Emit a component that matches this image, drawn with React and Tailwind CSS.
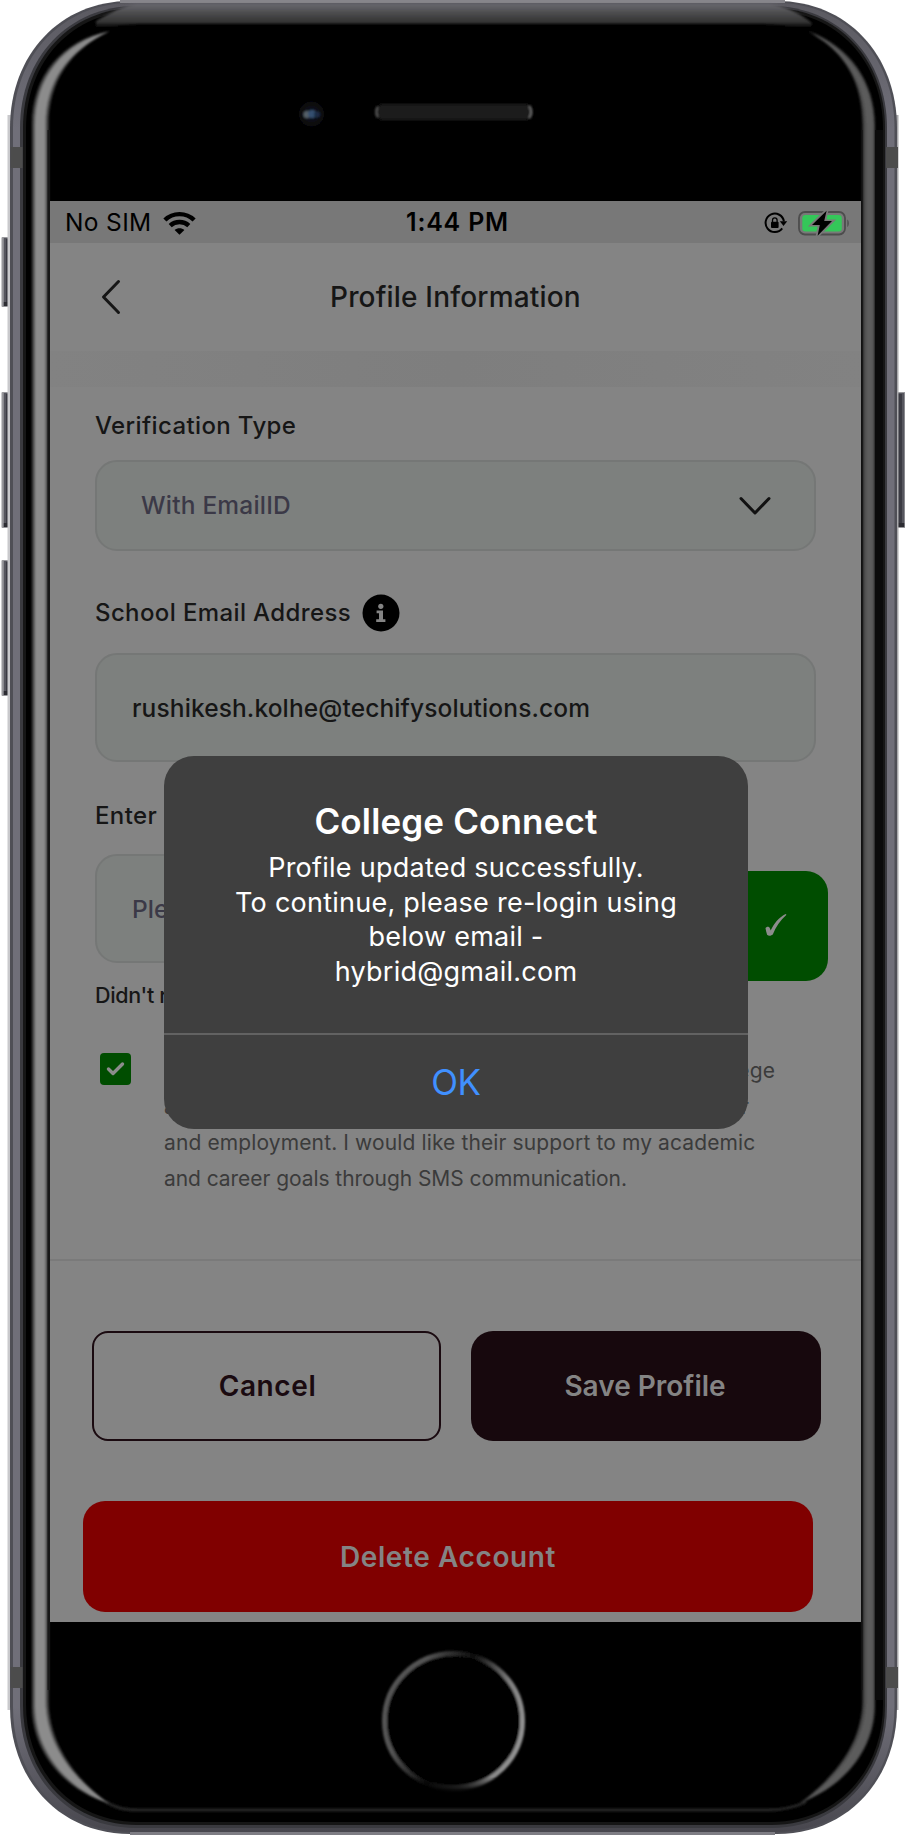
const SANS = "font-['Inter','Liberation_Sans',sans-serif]";

/* Rounded-rectangle outline of the handset between two corners. */
function shell(x1, y1, x2, y2, rx, ry) {
  return `M${x1 + rx} ${y1}H${x2 - rx}C${x2 - rx * 0.42} ${y1} ${x2} ${y1 + ry * 0.42} ${x2} ${y1 + ry}V${y2 - ry}C${x2} ${y2 - ry * 0.42} ${x2 - rx * 0.42} ${y2} ${x2 - rx} ${y2}H${x1 + rx}C${x1 + rx * 0.42} ${y2} ${x1} ${y2 - ry * 0.42} ${x1} ${y2 - ry}V${y1 + ry}C${x1} ${y1 + ry * 0.42} ${x1 + rx * 0.42} ${y1} ${x1 + rx} ${y1}Z`;
}

function SideKey({ x, y, h }) {
  return (
    <g>
      <rect x={x - 0.5} y={y} width="9" height={h} rx="1" fill="#98989c" />
      <rect x={x + 1.8} y={y + 1} width="7" height={h - 2} fill="#56565e" />
      <rect x={x + 4} y={y + 2} width="5" height={h - 4} fill="#3b3b43" />
      <rect x={x + 1.8} y={y + h - 5} width="7" height="4" fill="#2c2c32" />
    </g>
  );
}

function Handset() {
  return (
    <svg className="absolute inset-0" width="905" height="1835" viewBox="0 0 905 1835" aria-hidden="true">
      <defs>
        <linearGradient id="topBar" x1="0" x2="0" y1="0" y2="1">
          <stop offset="0" stopColor="#69686f" />
          <stop offset="0.3" stopColor="#4e4e50" />
          <stop offset="0.65" stopColor="#333333" />
          <stop offset="0.85" stopColor="#000000" />
        </linearGradient>
        <linearGradient id="edge" gradientUnits="userSpaceOnUse" x1="0" x2="0" y1="0" y2="1835">
          <stop offset="0" stopColor="#5a5960" />
          <stop offset="0.07" stopColor="#706f79" />
          <stop offset="0.93" stopColor="#706f79" />
          <stop offset="1" stopColor="#47464d" />
        </linearGradient>
        <linearGradient id="ring" x1="0" x2="1" y1="0.25" y2="0.6">
          <stop offset="0" stopColor="#555555" />
          <stop offset="0.2" stopColor="#555555" />
          <stop offset="0.5" stopColor="#0c0c0c" />
          <stop offset="0.8" stopColor="#808080" />
          <stop offset="1" stopColor="#929292" />
        </linearGradient>
        <linearGradient id="ringShade" x1="0" x2="0" y1="0" y2="1">
          <stop offset="0" stopColor="#000000" stopOpacity="0" />
          <stop offset="0.88" stopColor="#000000" stopOpacity="0" />
          <stop offset="0.97" stopColor="#000000" stopOpacity="0.85" />
        </linearGradient>
        <filter id="soft" x="-5%" y="-5%" width="110%" height="110%">
          <feGaussianBlur stdDeviation="0.9" />
        </filter>
      </defs>
      <SideKey x={2} y={237} h={70} />
      <SideKey x={2} y={392} h={136} />
      <SideKey x={2} y={560} h={136} />
      <g transform="translate(907 0) scale(-1 1)">
        <SideKey x={1} y={392} h={136} />
      </g>
      <rect x="7.500" y="115" width="4" height="1595" fill="#c9c9cc" />
      <rect x="895.500" y="115" width="3" height="1595" fill="#a9a9ac" />
      <path d={shell(10, 1, 897, 1834, 120, 127)} fill="#4f4f56" />
      <path d={shell(13, 3, 894.5, 1832, 118, 125)} fill="url(#edge)" />
      <path d="M120 0H785" stroke="#86858b" strokeWidth="6" />
      <path d="M130 1835H775" stroke="#7e7d84" strokeWidth="6" />
      <path d={shell(20, 6, 887, 1828, 116, 122)} fill="#3a3a3f" />
      <path d={shell(23, 8, 885, 1825, 114, 120)} fill="#161616" />
      <path d={shell(26, 11, 883, 1822, 112, 118)} fill="#000000" />
      {/* antenna bands */}
      <rect x="10.500" y="147" width="12" height="21" fill="#4c4c4c" />
      <rect x="886" y="147" width="12" height="21" fill="#4c4c4c" />
      <rect x="10.500" y="1667" width="12" height="21" fill="#4c4c4c" />
      <rect x="886" y="1667" width="12" height="21" fill="#4c4c4c" />
      <g filter="url(#soft)">
        {/* polished top and bottom edges */}
        <path d="M96 21C110 13 122 6 136 4H770C784 6 800 13 812 23L810 32C796 27 780 24 762 24H140C122 24 110 27 96 30Z" fill="url(#topBar)" />
        <path d="M106 1802C116 1808 124 1810 138 1810H768C783 1810 795 1807 806 1802" stroke="#262626" strokeWidth="3" fill="none" />
        {/* side reflections */}
        <path d="M110 31C62 40 32 76 32 125V1706C32 1752 64 1790 110 1804C78 1782 48.500 1745 48.500 1700V125C48.500 82 70 50 110 31Z" fill="#4c4c4c" />
        <path d="M108 32C64 42 35 78 35 125V1706C35 1750 66 1788 108 1803C74 1780 45.500 1745 45.500 1700V125C45.500 82 66 52 108 32Z" fill="#8c8c8c" />
        <path d="M808 31C850 46 875 82 875 125V1706C875 1748 846 1786 800 1803C836 1776 862.500 1742 862.500 1700V125C862.500 84 846 52 808 31Z" fill="#444444" />
        <path d="M812 34C850 50 873.500 84 873.500 125V1706C873.500 1746 848 1782 806 1800C840 1774 865.500 1742 865.500 1700V125C865.500 86 848 54 812 34Z" fill="#5b5b5b" />
      </g>
      <rect x="47.500" y="130" width="2.500" height="1560" fill="#171717" />
      <rect x="861" y="130" width="1.500" height="1560" fill="#111111" />
      <rect x="875" y="130" width="8" height="1570" fill="#0b0b0b" />
      {/* camera and speaker */}
      <g filter="url(#soft)">
        <circle cx="311.500" cy="114" r="13" fill="#070708" />
        <circle cx="311.500" cy="114" r="9" fill="#0f1114" />
        <circle cx="307" cy="114.500" r="3.500" fill="#566068" />
        <circle cx="312" cy="114" r="4" fill="#34506f" />
        <circle cx="317" cy="114.500" r="3" fill="#1c2b44" />
        <rect x="375" y="103" width="158" height="18" rx="8" fill="#0c0c0c" />
        <rect x="377" y="105" width="154" height="14" rx="6" fill="#1c1c1c" />
        <path d="M377.500 107C376 110 376 114 377.500 117" stroke="#5a5a5a" strokeWidth="2" fill="none" />
        <path d="M529 106C532 109 532 115 529 118" stroke="#6a6a6a" strokeWidth="2" fill="none" />
        {/* home key */}
        <ellipse cx="453.500" cy="1721" rx="69" ry="67.500" fill="#000000" stroke="url(#ring)" strokeWidth="5" />
      </g>
      <rect x="380" y="1650" width="148" height="144" fill="url(#ringShade)" />
    </svg>
  );
}

function WifiIcon() {
  return (
    <svg width="33" height="24" viewBox="0 0 33 24" fill="none" stroke="#000" strokeWidth="4.400">
      <path d="M1.900 9C9.800 1.100 23.200 1.100 31.100 9" />
      <path d="M7.200 14.600C12.300 9.800 20.700 9.800 25.800 14.600" />
      <path d="M16.500 23.800L11.600 19C14.300 16.500 18.700 16.500 21.400 19Z" fill="#000" stroke="none" />
    </svg>
  );
}

function RotationLockIcon() {
  return (
    <svg width="24" height="22" viewBox="0 0 24 22" fill="none">
      <path d="M18.200 16.300A9.200 9.200 0 1 1 19.900 9.400" stroke="#000" strokeWidth="2" />
      <path d="M15.800 9.300H23.200L19.500 14Z" fill="#000" />
      <rect x="7" y="9.800" width="7.600" height="6.200" rx="1" fill="#000" />
      <path d="M8.500 10V8.200A2.300 2.300 0 0 1 13.100 8.200V10" stroke="#000" strokeWidth="1.300" />
    </svg>
  );
}

function BatteryIcon() {
  return (
    <svg width="52" height="26" viewBox="0 0 52 26" fill="none">
      <rect x="1" y="2" width="46" height="22.500" rx="6" stroke="#4d4d4d" strokeWidth="1.800" />
      <rect x="4.300" y="5" width="39.500" height="16.500" rx="3.200" fill="#34c759" />
      <path d="M49.300 9.500C51.300 10.600 51.300 15.900 49.300 17Z" fill="#4d4d4d" />
      <path d="M28.500 1L14.200 14.800H21.800L19.600 25.500L33.900 11.200H26.300Z" fill="#787878" stroke="#787878" strokeWidth="3.600" />
      <path d="M28.600 0.800L14 14.900H21.800L19.600 25.700L34 11.100H26.200Z" fill="#000" />
    </svg>
  );
}

function StatusBar() {
  return (
    <div className="flex h-[42px] shrink-0 items-center justify-between bg-[#787878] pt-px pr-[11px] pl-[15px] text-black">
      <div className="flex w-[330px] items-center gap-[11px]">
        <span className="text-[24.5px] leading-none tracking-[0.35px]">No SIM</span>
        <WifiIcon />
      </div>
      <span className="text-[25px] leading-none font-semibold tracking-[0.8px]">1:44 PM</span>
      <div className="flex w-[330px] items-center justify-end gap-2.5">
        <RotationLockIcon />
        <BatteryIcon />
      </div>
    </div>
  );
}

function Header() {
  return (
    <div className="flex h-[108px] shrink-0 items-center bg-[#848484] pl-[51px]">
      <svg width="20" height="36" viewBox="0 0 20 36" fill="none" stroke="#161616" strokeWidth="3" strokeLinecap="round" strokeLinejoin="round">
        <path d="M17.500 2.500L2.500 18L17.500 33.500" />
      </svg>
      <h1 className="ml-[209px] text-[28px] leading-none font-medium tracking-[0.18px] text-[#161616]">Profile Information</h1>
    </div>
  );
}

function Label({ children }) {
  return <span className="text-[24px] leading-[36px] font-medium tracking-[0.38px] whitespace-nowrap text-[#161616]">{children}</span>;
}

const FIELD = "flex items-center rounded-[22px] border-2 border-[#757776] bg-[#7d807e]";

function Form() {
  return (
    <div className="flex h-[872px] shrink-0 flex-col pt-[21px] pl-[45px]">
      <Label>Verification Type</Label>
      <div className={`${FIELD} mt-4 h-[91px] w-[721px] justify-between pr-[42px] pl-[44px]`}>
        <span className="text-[24.5px] leading-none font-medium tracking-[0.2px] text-[#3b3947]">With EmailID</span>
        <svg width="34" height="20" viewBox="0 0 34 20" fill="none" stroke="#111" strokeWidth="3" strokeLinecap="round" strokeLinejoin="round">
          <path d="M3 2.500L17 17L31 2.500" />
        </svg>
      </div>

      <div className="mt-[43px] flex h-[37px] items-center gap-[11px]">
        <Label>School Email Address</Label>
        <svg width="38" height="38" viewBox="0 0 38 38">
          <circle cx="19" cy="19" r="18.500" fill="#000" />
          <circle cx="18.800" cy="12.300" r="2.600" fill="#848484" />
          <path d="M14.600 16.600H21V25.200H23.400V28H14.200V25.200H17V19.300H14.600Z" fill="#848484" />
        </svg>
      </div>
      <div className={`${FIELD} mt-[22px] h-[109px] w-[721px] pt-px pl-[35px]`}>
        <span className="text-[24.5px] leading-none font-medium tracking-[0.12px] text-[#161616]">rushikesh.kolhe@techifysolutions.com</span>
      </div>

      <div className="mt-9 flex h-[36px]">
        <Label>Enter</Label>
      </div>
      <div className="mt-5 flex h-[127px] w-[733px] items-start justify-between">
        <div className={`${FIELD} h-[109px] w-[560px] pt-px pl-[35px]`}>
          <span className="text-[24.5px] leading-none font-medium text-[#3b3947]">Please</span>
        </div>
        <div className="mt-[17px] flex h-[110px] w-[112px] items-center justify-center rounded-[22px] bg-[#004d00] pb-[3px] pl-[8px]">
          <svg width="24" height="24" viewBox="0 0 24 24" fill="#8c8c8c">
            <path d="M1.500 15.200C2.600 13.100 5.200 13.200 5.900 15.200L6.700 17.600C10 10.600 14.500 4.600 21.500 1L22.500 1.700C16 7.500 11.700 14 8.900 21.200C7.200 23 4.500 23.200 3.100 21.700C2.400 19.500 1.900 17.300 1.500 15.200Z" />
          </svg>
        </div>
      </div>
      <span className="-mt-[2px] text-[21.5px] leading-[32px] font-medium tracking-[-0.35px] text-[#161616]">Didn't receive</span>

      <div className="mt-[39px] flex items-start gap-[33px] pl-[5px]">
        <div className="mt-[3px] flex h-[32px] w-[31px] items-center justify-center rounded-[4px] bg-[#004d00]">
          <svg width="19" height="16" viewBox="0 0 19 16" fill="none" stroke="#8c8c8c" strokeWidth="3.400" strokeLinecap="round" strokeLinejoin="round">
            <path d="M2.500 8L7 12.500L16.500 3" />
          </svg>
        </div>
        <div className="flex w-[611px] flex-col pt-[3px] text-[21px] leading-[36px] tracking-[0.12px] whitespace-nowrap text-[#3b3b3b]">
          <span className="self-end">college</span>
          <span className="flex w-[585px] justify-between">
            <span>access</span>
            <span>for</span>
          </span>
          <span>and employment. I would like their support to my academic</span>
          <span className="tracking-[-0.06px]">and career goals through SMS communication.</span>
        </div>
      </div>
    </div>
  );
}

function Actions() {
  return (
    <div className="flex grow flex-col border-t-2 border-[#7a7a7a] pt-[70px] text-[28px] leading-none font-semibold">
      <div className="flex gap-[30px] pl-[42px]">
        <button className="h-[110px] w-[349px] rounded-[16px] border-2 border-[#1a0a10] pl-[2px] tracking-[0.6px] text-[#1a0a10]">Cancel</button>
        <button className="h-[110px] w-[350px] rounded-[22px] bg-[#17080d] pr-[2px] text-[#848484]">Save Profile</button>
      </div>
      <button className="mt-[60px] ml-[33px] h-[111px] w-[730px] rounded-[22px] bg-[#800000] tracking-[0.6px] text-[#848484]">Delete Account</button>
    </div>
  );
}

function Alert() {
  return (
    <div className="absolute top-[555px] left-[114px] flex h-[373px] w-[584px] flex-col overflow-hidden rounded-[30px] bg-[#3f3f3f] text-center text-white">
      <div className="flex h-[277px] flex-col items-center pt-[43px]">
        <h2 className="text-[35px] leading-[44px] font-semibold tracking-[0.15px]">College Connect</h2>
        <p className="mt-[8px] text-[27px] leading-[34.7px] tracking-[0.25px]">
          Profile updated successfully.
          <br />
          To continue, please re-login using
          <br />
          below email -
          <br />
          hybrid@gmail.com
        </p>
      </div>
      <button className="grow border-t-2 border-[#626262] text-[35px] leading-none tracking-[-0.5px] text-[#4090ff]">OK</button>
    </div>
  );
}

export default function App() {
  return (
    <div className={`relative flex h-[1835px] w-[905px] flex-col bg-white pt-[201px] pl-[50px] ${SANS}`}>
      <Handset />
      <div className="relative flex h-[1421px] w-[811px] flex-col overflow-hidden bg-[#848484]">
        <StatusBar />
        <Header />
        <div className="h-[36px] shrink-0 bg-linear-to-r from-[#828282] via-[#7e7e7e] to-[#828282]" />
        <Form />
        <Actions />
        <Alert />
      </div>
    </div>
  );
}
